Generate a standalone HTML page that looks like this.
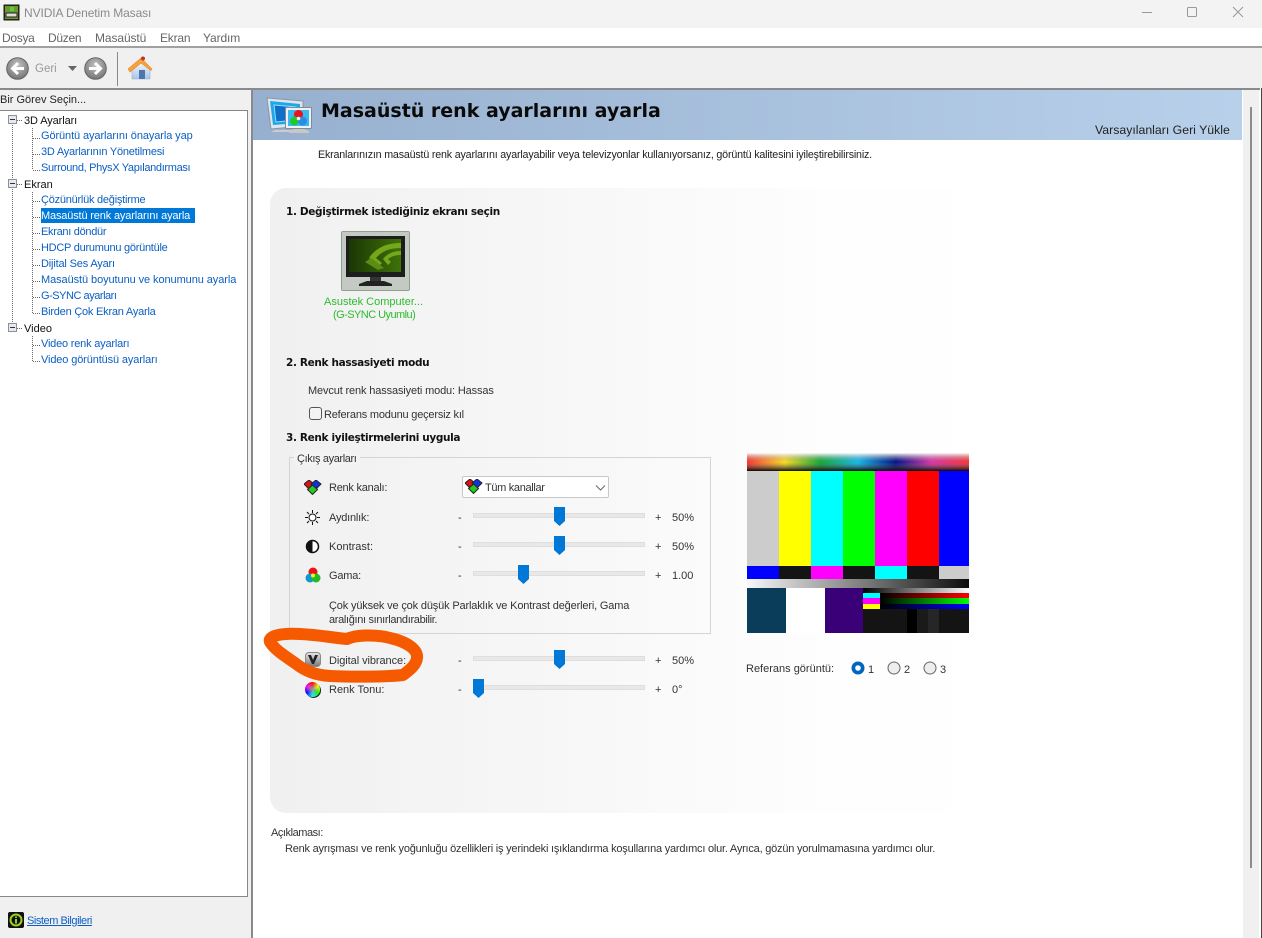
<!DOCTYPE html>
<html lang="tr"><head><meta charset="utf-8"><title>NVIDIA Denetim Masası</title>
<style>
html,body{margin:0;padding:0;background:#fff}
#r{position:relative;width:1262px;height:938px;overflow:hidden;background:#fff;font:11px "Liberation Sans","DejaVu Sans",sans-serif;color:#222}
#r div,#r span.t{position:absolute;white-space:nowrap}
#r span.t{margin-top:1px}
.t{line-height:14px}
.l{color:#0b5fc4}
.b{font-weight:bold;color:#111;font-family:"DejaVu Sans",sans-serif;font-size:10.5px;line-height:14px;letter-spacing:-.35px}
.g{color:#333}
.tr{background:#e8e8e8;border:1px solid #dedede;height:3px;width:170px;left:473px}
</style></head><body><div id="r">
<div style="left:0;top:0;width:1262px;height:28px;background:#f3f3f3"></div>
<div style="left:0;top:28px;width:1262px;height:18px;background:#fff"></div>
<div style="left:0;top:46px;width:1262px;height:2px;background:#a0a0a0"></div>
<div style="left:0;top:48px;width:1262px;height:40px;background:#f0f0f0"></div>
<div style="left:0;top:88px;width:1260px;height:2px;background:#8a8a8a"></div>
<div style="left:0;top:90px;width:252px;height:848px;background:#f0f0f0"></div>
<div style="left:251px;top:89px;width:2px;height:849px;background:#8a8a8a"></div>

<svg style="position:absolute;left:3px;top:4px" width="17" height="17" viewBox="0 0 17 17"><rect width="16" height="16" x=".5" y=".5" fill="#222"/><rect x="2" y="2" width="13" height="13" fill="#6d9a22"/><rect x="3" y="9" width="11" height="4" fill="#ddd" stroke="#222"/><rect x="7" y="3" width="4" height="4" fill="#4fd04f"/></svg>
<span class="t" style="left:24px;top:5px;font-size:12px;color:#8a8a8a;letter-spacing:-.1px">NVIDIA Denetim Masası</span>
<svg style="position:absolute;left:1130px;top:4px" width="116" height="16"><path d="M12 8.500h10" stroke="#999" fill="none"/><rect x="57.500" y="3.500" width="9" height="9" rx="1" fill="none" stroke="#999"/><path d="M103 3l10 10M113 3l-10 10" stroke="#999" fill="none"/></svg>

<span class="t" style="left:2px;top:30px;font-size:12px;color:#666;letter-spacing:-.3px">Dosya</span>
<span class="t" style="left:48px;top:30px;font-size:12px;color:#666;letter-spacing:-.3px">Düzen</span>
<span class="t" style="left:95px;top:30px;font-size:12px;color:#666;letter-spacing:-.1px">Masaüstü</span>
<span class="t" style="left:160px;top:30px;font-size:12px;color:#666;letter-spacing:-.2px">Ekran</span>
<span class="t" style="left:203px;top:30px;font-size:12px;color:#666;letter-spacing:-.1px">Yardım</span>

<svg style="position:absolute;left:6px;top:57px" width="23" height="23"><defs><radialGradient id="bt" cx=".5" cy=".35" r=".7"><stop offset="0" stop-color="#c4c4c4"/><stop offset="1" stop-color="#6e6e6e"/></radialGradient></defs><circle cx="11.500" cy="11.500" r="10.800" fill="url(#bt)" stroke="#666"/><path d="M18 11.500H7M12 6l-5.500 5.500L12 17" stroke="#fff" stroke-width="3" fill="none"/></svg>
<span class="t" style="left:35px;top:61px;color:#999;font-size:11.500px">Geri</span>
<svg style="position:absolute;left:68px;top:66px" width="9" height="5"><path d="M0 0h9L4.500 5z" fill="#666"/></svg>
<svg style="position:absolute;left:84px;top:57px" width="23" height="23"><circle cx="11.500" cy="11.500" r="10.800" fill="url(#bt)" stroke="#666"/><path d="M5 11.500h11M11 6l5.500 5.500L11 17" stroke="#fff" stroke-width="3" fill="none"/></svg>
<div style="left:117px;top:52px;width:1px;height:34px;background:#888"></div>
<svg style="position:absolute;left:128px;top:56px" width="25" height="25"><defs><linearGradient id="wl" x2="0" y2="1"><stop offset="0" stop-color="#f4f8fd"/><stop offset="1" stop-color="#a8c4e8"/></linearGradient></defs><path d="M4 14l9-8 9 8v9H4z" fill="url(#wl)" stroke="#9ab0d0" stroke-width=".6"/><path d="M0 13L13 2l11 11-1 1.500L13 7 2 16z" fill="#f7a03c" stroke="#e88a20" stroke-width=".6"/><rect x="11" y="14" width="6" height="9" fill="#4f74ae"/><circle cx="15" cy="2.500" r="2" fill="#b5382c"/></svg>

<span class="t" style="left:0;top:92px;color:#222;font-size:11px">Bir Görev Seçin...</span>
<div style="left:0;top:110px;width:247px;height:785px;background:#fff;border:1px solid #828790;border-left:0"></div>

<svg style="position:absolute;left:0;top:112px" width="60" height="260" shape-rendering="crispEdges">
<g stroke="#666" stroke-dasharray="1 1" fill="none"><path d="M12.500 13V212M32.500 16V58M32.500 80V201M32.500 224V249"/>
<path d="M17 8.500h6M17 72.500h6M17 216.500h6"/>
<path d="M33 26.500h7M33 42.500h7M33 58.500h7M33 89.500h7M33 105.500h7M33 121.500h7M33 137.500h7M33 153.500h7M33 169.500h7M33 185.500h7M33 201.500h7M33 233.500h7M33 249.500h7"/></g>
<g fill="#e8e8f0" stroke="#8a8f98"><rect x="8.500" y="3.500" width="8" height="8"/><rect x="8.500" y="67.500" width="8" height="8"/><rect x="8.500" y="211.500" width="8" height="8"/></g>
<path d="M10 7.500h5M10 71.500h5M10 215.500h5" stroke="#333"/>
</svg>

<span class="t" style="left:24px;top:113px;color:#111;letter-spacing:-.1px">3D Ayarları</span>
<span class="t l" style="left:41px;top:128px;letter-spacing:-.1px">Görüntü ayarlarını önayarla yap</span>
<span class="t l" style="left:41px;top:144px;letter-spacing:-.23px">3D Ayarlarının Yönetilmesi</span>
<span class="t l" style="left:41px;top:160px;letter-spacing:-.33px">Surround, PhysX Yapılandırması</span>
<span class="t" style="left:24px;top:177px;color:#111">Ekran</span>
<span class="t l" style="left:41px;top:192px;letter-spacing:-.24px">Çözünürlük değiştirme</span>
<div style="left:41px;top:208px;width:154px;height:15px;background:#0078d7"></div>
<span class="t" style="left:41px;top:208px;color:#fff;letter-spacing:-.16px">Masaüstü renk ayarlarını ayarla</span>
<span class="t l" style="left:41px;top:224px;letter-spacing:-.3px">Ekranı döndür</span>
<span class="t l" style="left:41px;top:240px;letter-spacing:-.26px">HDCP durumunu görüntüle</span>
<span class="t l" style="left:41px;top:256px;letter-spacing:-.17px">Dijital Ses Ayarı</span>
<span class="t l" style="left:41px;top:272px;letter-spacing:-.08px">Masaüstü boyutunu ve konumunu ayarla</span>
<span class="t l" style="left:41px;top:288px;letter-spacing:-.47px">G-SYNC ayarları</span>
<span class="t l" style="left:41px;top:304px;letter-spacing:-.22px">Birden Çok Ekran Ayarla</span>
<span class="t" style="left:24px;top:321px;color:#111">Video</span>
<span class="t l" style="left:41px;top:336px;letter-spacing:-.2px">Video renk ayarları</span>
<span class="t l" style="left:41px;top:352px;letter-spacing:-.13px">Video görüntüsü ayarları</span>

<svg style="position:absolute;left:8px;top:912px" width="16" height="16"><rect width="16" height="16" rx="2" fill="#111"/><circle cx="8" cy="8" r="5.500" fill="none" stroke="#9ad02a" stroke-width="2"/><path d="M8 4.500v1.500M8 7v4.500" stroke="#9ad02a" stroke-width="2"/></svg>
<span class="t" style="left:27px;top:913px;color:#0b5fc4;text-decoration:underline;letter-spacing:-.45px">Sistem Bilgileri</span>

<div style="left:253px;top:90px;width:989px;height:50px;background:linear-gradient(90deg,#97b0cf,#b8d0ea)"></div>
<div style="left:1243px;top:90px;width:16px;height:848px;background:#f0f0f0"></div>
<div style="left:1250px;top:107px;width:2px;height:761px;background:#8c8c8c"></div>
<div style="left:1261px;top:88px;width:1px;height:850px;background:#444"></div>

<svg style="position:absolute;left:265px;top:96px" width="50" height="40"><path d="M2 2l36 3v25L6 33z" fill="#dfe6ee" stroke="#8b97a5"/><path d="M5 5l30 3v19L8 29z" fill="#1fa8e8"/><path d="M9 9l22 2v13L11 26z" fill="#0d6fc8" stroke="#8fe0ff"/><path d="M6 36h22v-2H10z" fill="#ccc"/><rect x="20.500" y="11.500" width="26" height="21" rx="1" fill="#eef2f6" stroke="#7f8b98"/><rect x="23" y="14" width="21" height="16" fill="#3ab8f2"/><circle cx="33.500" cy="18.500" r="4.500" fill="#e8141c"/><circle cx="29.500" cy="25" r="4.500" fill="#1fc92c"/><circle cx="37.500" cy="25" r="4.500" fill="#2a8fe0"/><circle cx="33.500" cy="22.500" r="1.800" fill="#eee"/><path d="M24 37h20v-2l-5-2H29l-5 2z" fill="#c8c8c8"/></svg>
<span class="t" style="left:321px;top:97px;font:bold 19px/26px 'DejaVu Sans',sans-serif;color:#0a0a0a">Masaüstü renk ayarlarını ayarla</span>
<span class="t" style="left:1095px;top:122px;font-size:12.300px;color:#222">Varsayılanları Geri Yükle</span>

<span class="t" style="left:318px;top:147px;color:#222;font-size:10.700px;letter-spacing:-.18px">Ekranlarınızın masaüstü renk ayarlarını ayarlayabilir veya televizyonlar kullanıyorsanız, görüntü kalitesini iyileştirebilirsiniz.</span>

<div style="left:270px;top:188px;width:760px;height:625px;border-radius:16px 0 0 16px;background:linear-gradient(90deg,#f0f0f0,#fefefe 75%,#fff)"></div>

<span class="t b" style="left:286px;top:204px">1. Değiştirmek istediğiniz ekranı seçin</span>
<div style="left:341px;top:231px;width:67px;height:58px;background:#c3cac3;border:1px solid #8fa08f;border-radius:2px"></div>
<svg style="position:absolute;left:346px;top:236px" width="60" height="51"><defs><linearGradient id="sc" x2="1" y2="0"><stop offset="0" stop-color="#1b3605"/><stop offset="1" stop-color="#3f7208"/></linearGradient></defs><rect width="59" height="41" fill="#1d1d1d"/><rect x="3" y="3" width="52" height="33" fill="url(#sc)"/><path d="M55 7C42 7 30 11 23 22l10 8 3-3-6-5c6-7 14-10 25-10z" fill="#74a71a"/><path d="M55 15c-8 0-14 3-18 8l5 6 3-3-3-3c4-3 8-4 13-4z" fill="#74a71a"/><path d="M19 26l13 8 6-2-13-10z" fill="#5b8d14"/><rect x="24" y="41" width="11" height="4" fill="#333"/><path d="M13 50v-2l8-3h17l8 3v2z" fill="#222"/></svg>
<span class="t" style="left:324px;top:294px;color:#2dbb2d">Asustek Computer...</span>
<span class="t" style="left:333px;top:307px;color:#2dbb2d;letter-spacing:-.55px">(G-SYNC Uyumlu)</span>

<span class="t b" style="left:286px;top:355px">2. Renk hassasiyeti modu</span>
<span class="t g" style="left:308px;top:383px;letter-spacing:-.14px">Mevcut renk hassasiyeti modu: Hassas</span>
<div style="left:309px;top:407px;width:11px;height:11px;background:#f4f4f4;border:1px solid #555;border-radius:3px"></div>
<span class="t g" style="left:324px;top:407px;letter-spacing:-.2px">Referans modunu geçersiz kıl</span>
<span class="t b" style="left:286px;top:430px">3. Renk iyileştirmelerini uygula</span>

<div style="left:289px;top:457px;width:420px;height:175px;border:1px solid #d4d4d4"></div>
<div style="left:294px;top:451px;width:66px;height:14px;background:#f3f3f3"></div>
<span class="t g" style="left:297px;top:451px;letter-spacing:-.38px">Çıkış ayarları</span>

<svg style="position:absolute;left:304px;top:480px" width="18" height="15"><path d="M5 0l5 4-5 5-5-5z" fill="#d11" stroke="#222"/><path d="M12 0l5 4-5 5-5-5z" fill="#13d" stroke="#222"/><path d="M8.500 5l5 4.500-5 5-5-5z" fill="#2c2" stroke="#222"/></svg>
<span class="t g" style="left:329px;top:480px;letter-spacing:-.25px">Renk kanalı:</span>
<div style="left:462px;top:476px;width:145px;height:20px;background:#fff;border:1px solid #c8c8c8;border-radius:2px"></div>
<svg style="position:absolute;left:465px;top:479px" width="18" height="15"><path d="M5 0l5 4-5 5-5-5z" fill="#d11" stroke="#222"/><path d="M12 0l5 4-5 5-5-5z" fill="#13d" stroke="#222"/><path d="M8.500 5l5 4.500-5 5-5-5z" fill="#2c2" stroke="#222"/></svg>
<span class="t g" style="left:485px;top:480px;letter-spacing:-.33px">Tüm kanallar</span>
<svg style="position:absolute;left:595px;top:485px" width="11" height="6"><path d="M1 .5l4.500 4.500L10 .5" fill="none" stroke="#666"/></svg>

<svg style="position:absolute;left:305px;top:510px" width="15" height="15"><circle cx="7.500" cy="7.500" r="3.500" fill="#fff" stroke="#111"/><path d="M7.500 0v3M7.500 12v3M0 7.500h3M12 7.500h3M2 2l2 2M11 11l2 2M13 2l-2 2M4 11l-2 2" stroke="#111"/></svg>
<span class="t g" style="left:329px;top:510px;letter-spacing:-.2px">Aydınlık:</span>
<svg style="position:absolute;left:305px;top:539px" width="15" height="15"><circle cx="7.500" cy="7.500" r="6" fill="#fff" stroke="#111" stroke-width="1.500"/><path d="M7.500 1.500a6 6 0 0 0 0 12z" fill="#111"/></svg>
<span class="t g" style="left:329px;top:539px">Kontrast:</span>
<svg style="position:absolute;left:305px;top:567px" width="16" height="16"><circle cx="8" cy="5" r="4.500" fill="#e11"/><circle cx="5" cy="11" r="4.500" fill="#19c"/><circle cx="11" cy="11" r="4.500" fill="#2b2"/><circle cx="8" cy="8.500" r="2" fill="#ee3"/></svg>
<span class="t g" style="left:329px;top:568px;letter-spacing:-.2px">Gama:</span>

<div class="tr" style="top:513px"></div><div class="tr" style="top:542px"></div><div class="tr" style="top:571px"></div><div class="tr" style="top:656px"></div><div class="tr" style="top:685px"></div>
<svg style="position:absolute;left:0;top:0" width="1262" height="938">
<g fill="#0078d7"><path d="M554 507h11v14l-5.500 5-5.500-5z"/><path d="M554 536h11v14l-5.500 5-5.500-5z"/><path d="M518 565h11v14l-5.500 5-5.500-5z"/><path d="M554 650h11v14l-5.500 5-5.500-5z"/><path d="M473 679h11v14l-5.500 5-5.500-5z"/></g>
</svg>
<span class="t g" style="left:458px;top:510px">-</span><span class="t g" style="left:655px;top:510px">+</span><span class="t g" style="left:672px;top:510px">50%</span>
<span class="t g" style="left:458px;top:539px">-</span><span class="t g" style="left:655px;top:539px">+</span><span class="t g" style="left:672px;top:539px">50%</span>
<span class="t g" style="left:458px;top:568px">-</span><span class="t g" style="left:655px;top:568px">+</span><span class="t g" style="left:672px;top:568px">1.00</span>
<span class="t g" style="left:329px;top:598px;letter-spacing:-.16px">Çok yüksek ve çok düşük Parlaklık ve Kontrast değerleri, Gama</span>
<span class="t g" style="left:329px;top:612px;letter-spacing:-.33px">aralığını sınırlandırabilir.</span>

<svg style="position:absolute;left:305px;top:652px" width="16" height="16"><defs><linearGradient id="dv" x2="0" y2="1"><stop offset="0" stop-color="#e8e8e8"/><stop offset="1" stop-color="#777"/></linearGradient></defs><rect x=".5" y=".5" width="15" height="14" rx="3.500" fill="url(#dv)" stroke="#888"/><path d="M3 3l4 9h2l4-9h-3l-2 5-2-5z" fill="#222"/></svg>
<span class="t g" style="left:329px;top:653px;letter-spacing:-.07px">Digital vibrance:</span>
<span class="t g" style="left:458px;top:653px">-</span><span class="t g" style="left:655px;top:653px">+</span><span class="t g" style="left:672px;top:653px">50%</span>
<div style="left:305px;top:682px;width:15px;height:15px;border-radius:50%;background:radial-gradient(circle,#999 0,rgba(150,150,150,0) 65%),conic-gradient(#f00,#ff0,#0f0,#0ff,#00f,#f0f,#f00);box-shadow:1px 1px 0 #222"></div>
<span class="t g" style="left:329px;top:682px">Renk Tonu:</span>
<span class="t g" style="left:458px;top:682px">-</span><span class="t g" style="left:655px;top:682px">+</span><span class="t g" style="left:672px;top:682px">0°</span>

<svg style="position:absolute;left:747px;top:453px" width="222" height="180" shape-rendering="crispEdges">
<defs>
<linearGradient id="h"><stop offset="0" stop-color="#f33"/><stop offset=".17" stop-color="#fd2"/><stop offset=".33" stop-color="#1a3"/><stop offset=".5" stop-color="#1be"/><stop offset=".67" stop-color="#018"/><stop offset=".83" stop-color="#d3a"/><stop offset="1" stop-color="#f33"/></linearGradient>
<linearGradient id="v" x2="0" y2="1"><stop offset="0" stop-color="#fff" stop-opacity=".95"/><stop offset=".5" stop-color="#888" stop-opacity="0"/><stop offset="1" stop-color="#000" stop-opacity=".95"/></linearGradient>
<linearGradient id="w"><stop offset="0" stop-color="#000"/><stop offset="1" stop-color="#fff"/></linearGradient>
<linearGradient id="rr"><stop offset="0" stop-color="#000"/><stop offset="1" stop-color="#f00"/></linearGradient>
<linearGradient id="gg"><stop offset="0" stop-color="#000"/><stop offset="1" stop-color="#0f0"/></linearGradient>
<linearGradient id="bb"><stop offset="0" stop-color="#000"/><stop offset="1" stop-color="#00f"/></linearGradient>
<linearGradient id="s"><stop offset="0" stop-color="#f8f8f8"/><stop offset="1" stop-color="#0c0c0c"/></linearGradient>
</defs>
<rect width="222" height="18" fill="url(#h)"/><rect width="222" height="18" fill="url(#v)"/>
<rect y="18" width="32" height="95" fill="#ccc"/><rect x="32" y="18" width="32" height="95" fill="#ff0"/><rect x="64" y="18" width="32" height="95" fill="#0ff"/><rect x="96" y="18" width="32" height="95" fill="#0f0"/><rect x="128" y="18" width="32" height="95" fill="#f0f"/><rect x="160" y="18" width="32" height="95" fill="#f00"/><rect x="192" y="18" width="30" height="95" fill="#00f"/>
<rect y="113" width="32" height="13" fill="#00f"/><rect x="32" y="113" width="32" height="13" fill="#141414"/><rect x="64" y="113" width="32" height="13" fill="#f0f"/><rect x="96" y="113" width="32" height="13" fill="#141414"/><rect x="128" y="113" width="32" height="13" fill="#0ff"/><rect x="160" y="113" width="32" height="13" fill="#141414"/><rect x="192" y="113" width="30" height="13" fill="#ccc"/>
<rect y="126" width="222" height="9" fill="url(#s)"/>
<rect y="135" width="39" height="45" fill="#0a3d5a"/><rect x="39" y="135" width="39" height="45" fill="#fff"/><rect x="78" y="135" width="38" height="45" fill="#3a0078"/>
<rect x="116" y="135" width="106" height="45" fill="#141414"/>
<rect x="116" y="135" width="106" height="5" fill="url(#w)"/>
<rect x="116" y="140" width="17" height="5" fill="#0ff"/><rect x="116" y="145" width="17" height="6" fill="#f0f"/><rect x="116" y="151" width="17" height="5" fill="#ff0"/>
<rect x="133" y="140" width="89" height="5" fill="url(#rr)"/><rect x="133" y="145" width="89" height="6" fill="url(#gg)"/><rect x="133" y="151" width="89" height="5" fill="url(#bb)"/>
<rect x="160" y="156" width="10" height="24" fill="#000"/><rect x="170" y="156" width="11" height="24" fill="#1a1a1a"/><rect x="181" y="156" width="11" height="24" fill="#262626"/>
</svg>

<span class="t g" style="left:746px;top:661px">Referans görüntü:</span>
<svg style="position:absolute;left:851px;top:661px" width="90" height="15"><circle cx="7" cy="7" r="6.500" fill="#0067c0"/><circle cx="7" cy="7" r="2.800" fill="#fff"/><circle cx="43" cy="7" r="6" fill="#eee" stroke="#666"/><circle cx="79" cy="7" r="6" fill="#eee" stroke="#666"/></svg>
<span class="t g" style="left:868px;top:662px">1</span><span class="t g" style="left:904px;top:662px">2</span><span class="t g" style="left:940px;top:662px">3</span>

<span class="t g" style="left:271px;top:825px;letter-spacing:-.45px">Açıklaması:</span>
<span class="t g" style="left:285px;top:841px;letter-spacing:-.22px">Renk ayrışması ve renk yoğunluğu özellikleri iş yerindeki ışıklandırma koşullarına yardımcı olur. Ayrıca, gözün yorulmamasına yardımcı olur.</span>

<svg style="position:absolute;left:0;top:0" width="1262" height="938"><path d="M270 642C268 636 280 633 300 634C320 635 335 638 347 639C355 635 375 634 390 638C408 642 418 650 417 658C416 666 408 671 403 675C385 677 350 677 330 676C315 675 305 671 295 663C285 656 275 650 270 642Z" fill="none" stroke="#f55a00" stroke-width="12" stroke-linejoin="round"/></svg>
</div></body></html>
